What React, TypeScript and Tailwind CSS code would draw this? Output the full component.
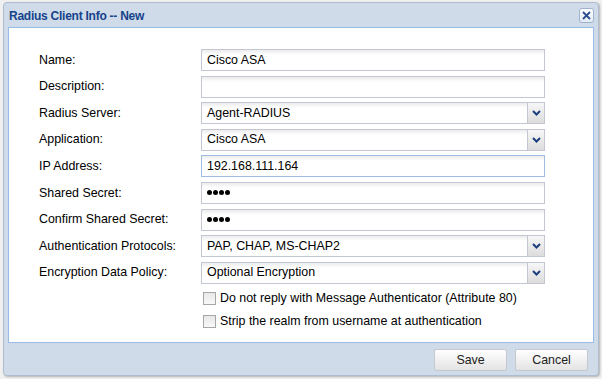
import React from 'react';

const font = { fontFamily: '"Liberation Sans", Arial, sans-serif' };

const TextField = ({ value, focused, secret }: { value?: string; focused?: boolean; secret?: boolean }) => (
    <div
        className={`h-[22px] w-[344px] border ${focused ? 'border-[#9fbce3]' : 'border-[#c2c7d2]'} bg-[linear-gradient(#ececec,#ffffff_5px)] px-[5px] flex items-center text-[12.4px] text-black`}
    >
        {secret ? (
            <span className="flex gap-[1px]">
                {[0, 1, 2, 3].map(i => (
                    <span key={i} className="w-[5px] h-[5px] rounded-full bg-black" />
                ))}
            </span>
        ) : (
            value
        )}
    </div>
);

const Combo = ({ value }: { value: string }) => (
    <div className="h-[22px] w-[344px] flex border border-[#c2c7d2] text-[12.4px] text-black">
        <div className="flex-1 bg-[linear-gradient(#ececec,#ffffff_5px)] px-[5px] flex items-center">{value}</div>
        <div className="w-[17px] border-l border-[#c2c7d2] bg-[linear-gradient(#f7f7f7,#dcdcdc)] flex items-center justify-center">
            <svg width="9" height="6" viewBox="0 0 9 6">
                <path d="M1 1 L4.5 4.5 L8 1" fill="none" stroke="#1c3f7e" strokeWidth="2" />
            </svg>
        </div>
    </div>
);

const Checkbox = ({ label }: { label: string }) => (
    <div className="flex items-center gap-[4px] text-[12.4px] text-black h-[20px]">
        <span className="w-[13px] h-[13px] border border-[#a6a6a6] bg-[linear-gradient(#e8e8e8,#f8f8f8)]" />
        <span>{label}</span>
    </div>
);

const rows: { label: string; field: React.ReactNode }[] = [
    { label: 'Name:', field: <TextField value="Cisco ASA" /> },
    { label: 'Description:', field: <TextField /> },
    { label: 'Radius Server:', field: <Combo value="Agent-RADIUS" /> },
    { label: 'Application:', field: <Combo value="Cisco ASA" /> },
    { label: 'IP Address:', field: <TextField value="192.168.111.164" focused /> },
    { label: 'Shared Secret:', field: <TextField secret /> },
    { label: 'Confirm Shared Secret:', field: <TextField secret /> },
    { label: 'Authentication Protocols:', field: <Combo value="PAP, CHAP, MS-CHAP2" /> },
    { label: 'Encryption Data Policy:', field: <Combo value="Optional Encryption" /> },
];

const Button = ({ children }: { children: React.ReactNode }) => (
    <button className="w-[73px] h-[22px] border border-[#c4c8cf] rounded-[2px] bg-[linear-gradient(#ffffff,#f1f1f1_50%,#e3e3e3)] text-[12.4px] text-[#222]">
        {children}
    </button>
);

export default function App() {
    return (
        <div className="w-[602px] h-[379px] bg-[#f0f0f0] pl-[3px] pt-[2px]" style={font}>
            <div className="w-[596px] h-[374px] flex flex-col border border-[#aebdd0] rounded-[4px] bg-[#cfdbe8] shadow-[1px_1px_2px_rgba(0,0,0,0.25)]">
                <div className="h-[24px] flex items-center justify-between pl-[5px] pr-[4px] pt-[1px]">
                    <span className="text-[12px] font-bold tracking-[-0.25px] text-[#15428b]">Radius Client Info -- New</span>
                    <span className="w-[15px] h-[15px] rounded-[3px] border border-[#9fb3cf] bg-[linear-gradient(#ffffff,#e3ebf5)] flex items-center justify-center">
                        <svg width="9" height="9" viewBox="0 0 9 9">
                            <path d="M1 1 L8 8 M8 1 L1 8" stroke="#2a4d8f" strokeWidth="1.8" />
                        </svg>
                    </span>
                </div>
                <div className="mx-[4px] h-[316px] border border-[#99bbe8] bg-white pt-[21px] pl-[30px]">
                    <div className="flex flex-col gap-[4.6px]">
                        {rows.map(r => (
                            <div key={r.label} className="flex items-center">
                                <span className="w-[162px] text-[12.4px] text-black">{r.label}</span>
                                {r.field}
                            </div>
                        ))}
                    </div>
                    <div className="flex flex-col pl-[164px] pt-[5px] gap-[3px]">
                        <Checkbox label="Do not reply with Message Authenticator (Attribute 80)" />
                        <Checkbox label="Strip the realm from username at authentication" />
                    </div>
                </div>
                <div className="flex justify-end gap-[8px] pr-[10px] pt-[6px]">
                    <Button>Save</Button>
                    <Button>Cancel</Button>
                </div>
            </div>
        </div>
    );
}
